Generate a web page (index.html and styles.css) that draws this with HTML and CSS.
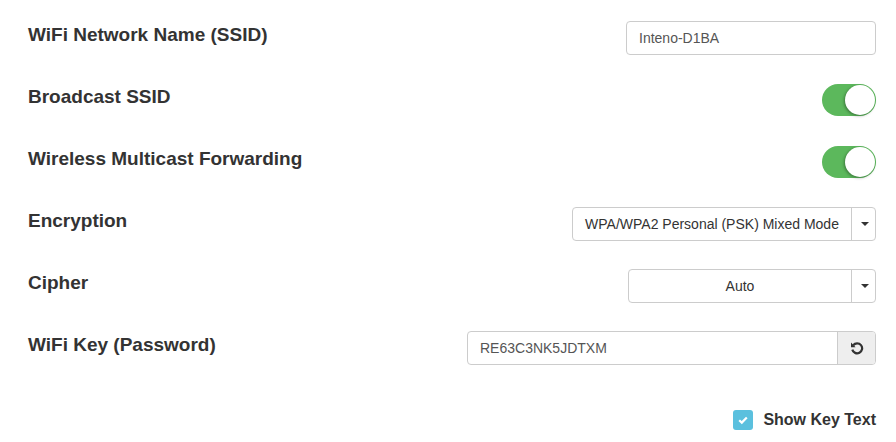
FILE: index.html
```html
<!DOCTYPE html>
<html>
<head>
<meta charset="utf-8">
<link rel="stylesheet" href="styles.css">
</head>
<body>
<div class="form">
  <div class="row">
    <div class="label">WiFi Network Name (SSID)</div>
    <div class="input w-ssid">Inteno-D1BA</div>
  </div>
  <div class="row">
    <div class="label">Broadcast SSID</div>
    <div class="switch"><span class="knob"></span></div>
  </div>
  <div class="row">
    <div class="label">Wireless Multicast Forwarding</div>
    <div class="switch"><span class="knob"></span></div>
  </div>
  <div class="row">
    <div class="label">Encryption</div>
    <div class="select w-enc">
      <div class="select-value">WPA/WPA2 Personal (PSK) Mixed Mode</div>
      <div class="select-btn"><span class="caret"></span></div>
    </div>
  </div>
  <div class="row">
    <div class="label">Cipher</div>
    <div class="select w-cipher">
      <div class="select-value">Auto</div>
      <div class="select-btn"><span class="caret"></span></div>
    </div>
  </div>
  <div class="row">
    <div class="label">WiFi Key (Password)</div>
    <div class="input-group w-key">
      <div class="group-value">RE63C3NK5JDTXM</div>
      <div class="group-btn">
        <svg width="14" height="14" viewBox="0 0 14 14">
          <path d="M3.2 4.2 A5 5 0 1 1 2.3 8.6" fill="none" stroke="#333" stroke-width="2.2"/>
          <path d="M1 1.6 L5.6 6.2 L1 6.2 Z" fill="#333"/>
        </svg>
      </div>
    </div>
  </div>
  <div class="check-row">
    <span class="checkbox">
      <svg width="12" height="12" viewBox="0 0 12 12">
        <path d="M2.2 6.2 L4.8 8.6 L9.8 3.4" fill="none" stroke="#fff" stroke-width="2.2"/>
      </svg>
    </span>
    <span class="check-label">Show Key Text</span>
  </div>
</div>
</body>
</html>
```

FILE: styles.css
```css
* { box-sizing: border-box; }
html, body { margin: 0; padding: 0; background: #fff; }
body { font-family: "Liberation Sans", Arial, sans-serif; color: #333; }

.form { padding: 7px 20px 0 28px; }

.row {
  display: flex;
  align-items: center;
  justify-content: space-between;
  height: 62px;
}

.label {
  font-size: 19px;
  font-weight: bold;
  line-height: 22px;
  margin-bottom: 7px;
  color: #333;
}

.input {
  height: 34px;
  border: 1px solid #ccc;
  border-radius: 4px;
  padding: 0 12px;
  font-size: 14px;
  line-height: 32px;
  color: #555;
}
.w-ssid { width: 250px; }

.switch {
  width: 54px;
  height: 32px;
  border-radius: 16px;
  background: #5cb85c;
  display: flex;
  justify-content: flex-end;
  align-items: center;
  padding: 1px;
}
.knob {
  width: 30px;
  height: 30px;
  border-radius: 50%;
  background: #fff;
  box-shadow: -1px 1px 3px rgba(0,0,0,0.35);
}

.select {
  display: flex;
  height: 34px;
  border: 1px solid #ccc;
  border-radius: 4px;
  font-size: 14px;
  color: #333;
}
.w-enc { width: 304px; }
.w-cipher { width: 248px; }
.select-value {
  flex: 1;
  text-align: center;
  line-height: 32px;
  padding: 0 10px;
  white-space: nowrap;
}
.select-btn {
  width: 24px;
  border-left: 1px solid #ccc;
  display: flex;
  align-items: center;
  justify-content: center;
}
.caret {
  width: 0;
  height: 0;
  border-top: 4px solid #333;
  border-left: 4px solid transparent;
  border-right: 4px solid transparent;
  margin-left: 2px;
}

.input-group {
  display: flex;
  height: 34px;
  border: 1px solid #ccc;
  border-radius: 4px;
  font-size: 14px;
  color: #555;
  overflow: hidden;
}
.w-key { width: 409px; }
.group-value {
  flex: 1;
  padding: 0 12px;
  line-height: 32px;
}
.group-btn {
  width: 38px;
  background: #eee;
  border-left: 1px solid #ccc;
  display: flex;
  align-items: center;
  justify-content: center;
}

.check-row {
  display: flex;
  justify-content: flex-end;
  align-items: center;
  padding-top: 31px;
}
.checkbox {
  width: 20px;
  height: 20px;
  border-radius: 3px;
  background: #5bc0de;
  display: flex;
  align-items: center;
  justify-content: center;
  margin-right: 10px;
}
.check-label {
  font-size: 16px;
  font-weight: bold;
  line-height: 20px;
  color: #333;
}
```
